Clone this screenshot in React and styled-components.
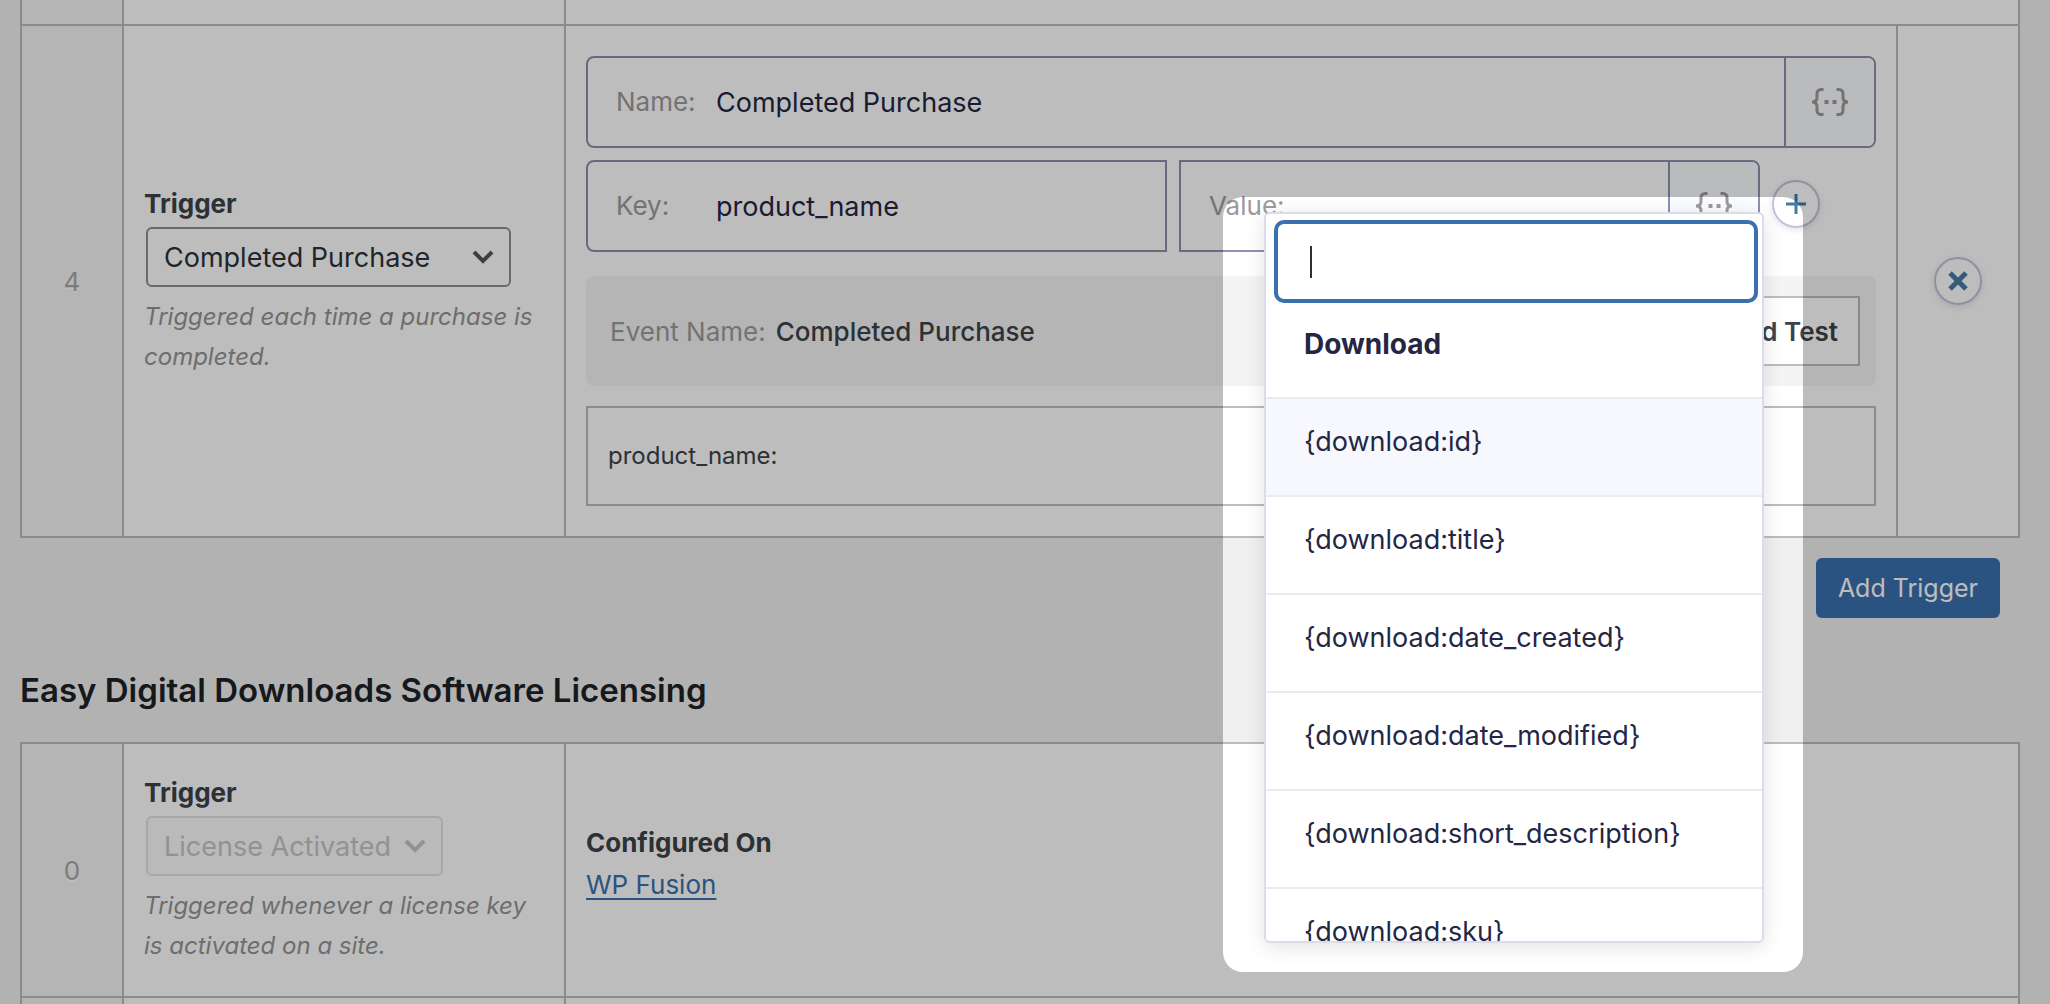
import React, { useState } from "react";
import styled, { createGlobalStyle } from "styled-components";

const GlobalStyle = createGlobalStyle`
  *, *::before, *::after { box-sizing: border-box; }
  body {
    margin: 0;
    background: #f0f0f1;
    font-family: Inter, "Liberation Sans", sans-serif;
    font-size: 26px;
    color: #3c434a;
  }
  input, select, button { font-family: inherit; }
`;

const Page = styled.main`
  height: 100vh;
  overflow: hidden;
  position: relative;
  padding: 0 30px 0 20px;
`;

const Repeater = styled.table`
  width: 100%;
  table-layout: fixed;
  border-collapse: separate;
  border-spacing: 0;
  border: solid #bcbcbc;
  border-width: ${(p) => (p.$continued ? "0 2px 2px 0" : "2px 2px 2px 0")};
  background: #fff;
`;

const Column = styled.col`
  width: ${(p) => p.$width};
`;

const Cell = styled.td`
  padding: ${(p) => (p.$empty ? "0" : "30px 20px")};
  height: ${(p) => (p.$empty ? "24px" : "auto")};
  border-left: 2px solid #bcbcbc;
  vertical-align: middle;
  tr + tr > & { border-top: 2px solid #bcbcbc; }
`;

const IndexCell = styled(Cell)`
  background: #f4f4f4;
  text-align: center;
  color: #a6a6a6;
  text-shadow: 0 2px 0 #fff;
`;

const Title = styled.label`
  display: block;
  line-height: 38px;
  font-weight: 700;
`;

const SelectBox = styled.span`
  display: inline-grid;
  align-items: center;
  width: ${(p) => p.$width};
  height: 60px;
  margin: 4px 2px 10px;
  color: ${(p) => (p.$muted ? "#c4c5c8" : "#555")};
  > * { grid-area: 1 / 1; }
  svg { justify-self: end; margin-right: 17px; pointer-events: none; }
`;

const Select = styled.select`
  appearance: none;
  width: 100%;
  height: 100%;
  padding: 0 0 0 16px;
  border: 2px solid #8c8f94;
  border-radius: 6px;
  background: #fff;
  color: #2c3338;
  font-size: 27px;
  opacity: 1;
  &:disabled {
    border-color: #e2e2e4;
    background: #fbfbfc;
    color: #c4c5c8;
  }
`;

const Description = styled.p`
  margin: 0;
  line-height: 40px;
  font-size: 24px;
  font-style: italic;
  color: #949494;
`;

const Fields = styled.div`
  display: grid;
  gap: 12px;
`;

const PairRow = styled.div`
  display: grid;
  grid-template-columns: minmax(0, 1fr) minmax(0, 1fr) 104px;
  gap: 12px;
`;

const FieldAnchor = styled.div`
  position: relative;
`;

const Field = styled.div`
  display: flex;
  height: 92px;
  border: 2px solid #8e90b0;
  border-radius: ${(p) => p.$radius};
  background: #fff;
  overflow: hidden;
`;

const FieldLabel = styled.label`
  flex: none;
  width: 128px;
  padding-left: 28px;
  line-height: 88px;
  color: #9b9b9b;
`;

const FieldInput = styled.input`
  flex: 1;
  min-width: 0;
  padding: 0;
  border: 0;
  outline: 0;
  background: transparent;
  font-size: 27px;
  color: #252644;
`;

const TagButton = styled.button`
  flex: none;
  display: grid;
  place-items: center;
  width: 90px;
  padding: 0;
  border: 0;
  border-left: 2px solid #8e90b0;
  background: #fbfcff;
  color: #9b9b9b;
`;

const AddCell = styled.div`
  padding-top: 20px;
`;

const RoundButton = styled.button`
  display: inline-grid;
  place-items: center;
  width: 48px;
  height: 48px;
  padding: 0;
  border: 2px solid #c4c3d6;
  border-radius: 50%;
  background: #fff;
  color: ${(p) => p.$color};
  box-shadow: 0 2px 6px rgba(60, 60, 120, 0.14);
`;

const EventBar = styled.div`
  display: flex;
  align-items: center;
  gap: 10px;
  height: 110px;
  margin: 12px 0 8px;
  padding: 0 16px 0 24px;
  border-radius: 8px;
  background: #f4f4f4;
`;

const EventCaption = styled.span`
  color: #9b9b9b;
`;

const EventName = styled.span`
  flex: 1;
  font-weight: 500;
`;

const TestButton = styled.button`
  height: 70px;
  padding: 0 20px;
  border: 2px solid #bcbcbc;
  background: #fff;
  font-size: 26px;
  font-weight: 600;
  color: #3c434a;
`;

const Preview = styled.div`
  height: 100px;
  padding: 0 20px;
  border: 2px solid #bcbcbc;
  line-height: 96px;
  font-size: 24px;
`;

const RemoveCell = styled(Cell)`
  padding: 0;
  text-align: center;
`;

const Popover = styled.div`
  position: absolute;
  z-index: 10;
  top: 52px;
  right: -4px;
  width: 500px;
  height: 731px;
`;

const Spotlight = styled.div`
  position: absolute;
  inset: -15px -39px -29px -41px;
  border-radius: 20px;
  box-shadow: 0 0 0 3000px rgba(0, 0, 0, 0.26);
`;

const Dropdown = styled.div`
  position: relative;
  height: 100%;
  border: 2px solid #dcdbea;
  border-radius: 6px;
  background: #fff;
  overflow: hidden;
  color: #252644;
  font-size: 28px;
  box-shadow: 0 4px 20px rgba(0, 0, 0, 0.12);
`;

const SearchBox = styled.div`
  display: flex;
  align-items: center;
  height: 83px;
  margin: 6px 4px 0 8px;
  padding-left: 32px;
  border: 4px solid #3a70ae;
  border-radius: 10px;
`;

const Caret = styled.span`
  width: 2px;
  height: 32px;
  background: #2c3338;
`;

const SearchInput = styled.input`
  flex: 1;
  min-width: 0;
  height: 100%;
  border: 0;
  outline: 0;
  background: transparent;
  caret-color: transparent;
  font-size: 27px;
`;

const TagHeading = styled.div`
  height: 96px;
  padding: 22px 38px 0;
  border-bottom: 2px solid #ebebf3;
  line-height: 38px;
  font-weight: 700;
`;

const TagList = styled.ul`
  margin: 0;
  padding: 0;
  list-style: none;
`;

const TagItem = styled.button`
  display: block;
  width: 100%;
  height: 98px;
  padding: 24px 38px 34px;
  border: 0;
  border-bottom: 2px solid #ebebf3;
  background: ${(p) => (p.$active ? "#f7f8fd" : "#fff")};
  color: inherit;
  font-size: 27px;
  line-height: 38px;
  text-align: left;
`;

const Actions = styled.div`
  display: flex;
  justify-content: flex-end;
  padding: 20px 20px 0;
`;

const PrimaryButton = styled.button`
  height: 60px;
  padding: 0 22px;
  border: 0;
  border-radius: 6px;
  background: #3a70ae;
  color: #fff;
  font-size: 25px;
`;

const SectionTitle = styled.h2`
  margin: 48px 0 28px;
  line-height: 48px;
  font-size: 33px;
  font-weight: 600;
  color: #1d2327;
`;

const Configured = styled.div`
  padding-bottom: 12px;
  line-height: 42px;
`;

const ConfiguredTitle = styled.div`
  font-weight: 700;
`;

const Link = styled.a`
  color: #3a70ae;
  text-underline-offset: 4px;
`;

const Chevron = () => (
  <svg width="22" height="14" viewBox="0 0 22 14" fill="none" stroke="currentColor" strokeWidth="4" aria-hidden="true">
    <path d="M2 2 11 11l9-9" />
  </svg>
);

const Braces = () => (
  <svg width="38" height="28" viewBox="0 0 38 28" fill="none" stroke="currentColor" strokeWidth="3" aria-hidden="true">
    <path d="M12.500 1.500H10A4 4 0 0 0 6 5.500V9.500Q6 14 1 14Q6 14 6 18.500V22.500A4 4 0 0 0 10 26.500H12.500" />
    <path d="M25.500 1.500H28A4 4 0 0 1 32 5.500V9.500Q32 14 37 14Q32 14 32 18.500V22.500A4 4 0 0 1 28 26.500H25.500" />
    <path d="M13.500 14h4M21.500 14h4" strokeWidth="4" />
  </svg>
);

const Plus = () => (
  <svg width="20" height="20" viewBox="0 0 20 20" stroke="currentColor" strokeWidth="3" aria-hidden="true">
    <path d="M10 0v20M0 10h20" />
  </svg>
);

const Cross = () => (
  <svg width="20" height="20" viewBox="0 0 20 20" stroke="currentColor" strokeWidth="5" aria-hidden="true">
    <path d="M2 2l16 16M18 2L2 18" />
  </svg>
);

const TAGS = [
  "{download:id}",
  "{download:title}",
  "{download:date_created}",
  "{download:date_modified}",
  "{download:short_description}",
  "{download:sku}",
];

function TriggerCell({ id, option, width, disabled, children }) {
  return (
    <Cell>
      <Title htmlFor={id}>Trigger</Title>
      <SelectBox $width={width} $muted={disabled}>
        <Select id={id} disabled={disabled}>
          <option>{option}</option>
        </Select>
        <Chevron />
      </SelectBox>
      <Description>{children}</Description>
    </Cell>
  );
}

function TagPicker({ query, onQuery }) {
  return (
    <Popover>
      <Spotlight />
      <Dropdown>
        <SearchBox>
          <Caret />
          <SearchInput aria-label="Search tags" value={query} onChange={(e) => onQuery(e.target.value)} />
        </SearchBox>
        <TagHeading>Download</TagHeading>
        <TagList>
          {TAGS.filter((tag) => tag.includes(query)).map((tag, i) => (
            <li key={tag}>
              <TagItem type="button" $active={i === 0}>{tag}</TagItem>
            </li>
          ))}
        </TagList>
      </Dropdown>
    </Popover>
  );
}

const Columns = () => (
  <colgroup>
    <Column $width="102px" />
    <Column $width="442px" />
    <Column $width="auto" />
    <Column $width="122px" />
  </colgroup>
);

export default function App() {
  const [query, setQuery] = useState("");
  return (
    <>
      <GlobalStyle />
      <Page>
        <Repeater $continued>
          <Columns />
          <tbody>
            <tr>
              <IndexCell $empty />
              <Cell $empty />
              <Cell $empty colSpan={2} />
            </tr>
            <tr>
              <IndexCell>4</IndexCell>
              <TriggerCell id="trigger-4" option="Completed Purchase" width="365px">
                Triggered each time a purchase is completed.
              </TriggerCell>
              <Cell>
                <Fields>
                  <Field $radius="8px">
                    <FieldLabel htmlFor="event-name">Name:</FieldLabel>
                    <FieldInput id="event-name" defaultValue="Completed Purchase" />
                    <TagButton type="button" aria-label="Insert tag"><Braces /></TagButton>
                  </Field>
                  <PairRow>
                    <Field $radius="8px 0 0 8px">
                      <FieldLabel htmlFor="event-key">Key:</FieldLabel>
                      <FieldInput id="event-key" defaultValue="product_name" />
                    </Field>
                    <FieldAnchor>
                      <Field $radius="0 8px 8px 0">
                        <FieldLabel htmlFor="event-value">Value:</FieldLabel>
                        <FieldInput id="event-value" />
                        <TagButton type="button" aria-label="Insert tag"><Braces /></TagButton>
                      </Field>
                      <TagPicker query={query} onQuery={setQuery} />
                    </FieldAnchor>
                    <AddCell>
                      <RoundButton type="button" aria-label="Add pair" $color="#3f7dab"><Plus /></RoundButton>
                    </AddCell>
                  </PairRow>
                  <EventBar>
                    <EventCaption>Event Name:</EventCaption>
                    <EventName>Completed Purchase</EventName>
                    <TestButton type="button">Send Test</TestButton>
                  </EventBar>
                  <Preview>product_name:</Preview>
                </Fields>
              </Cell>
              <RemoveCell>
                <RoundButton type="button" aria-label="Remove trigger" $color="#4a7ba5"><Cross /></RoundButton>
              </RemoveCell>
            </tr>
          </tbody>
        </Repeater>
        <Actions>
          <PrimaryButton type="button">Add Trigger</PrimaryButton>
        </Actions>
        <SectionTitle>Easy Digital Downloads Software Licensing</SectionTitle>
        <Repeater>
          <Columns />
          <tbody>
            <tr>
              <IndexCell>0</IndexCell>
              <TriggerCell id="trigger-0" option="License Activated" width="297px" disabled>
                Triggered whenever a license key is activated on a site.
              </TriggerCell>
              <Cell colSpan={2}>
                <Configured>
                  <ConfiguredTitle>Configured On</ConfiguredTitle>
                  <Link href="#wp-fusion">WP Fusion</Link>
                </Configured>
              </Cell>
            </tr>
            <tr>
              <IndexCell $empty />
              <Cell $empty />
              <Cell $empty colSpan={2} />
            </tr>
          </tbody>
        </Repeater>
      </Page>
    </>
  );
}
